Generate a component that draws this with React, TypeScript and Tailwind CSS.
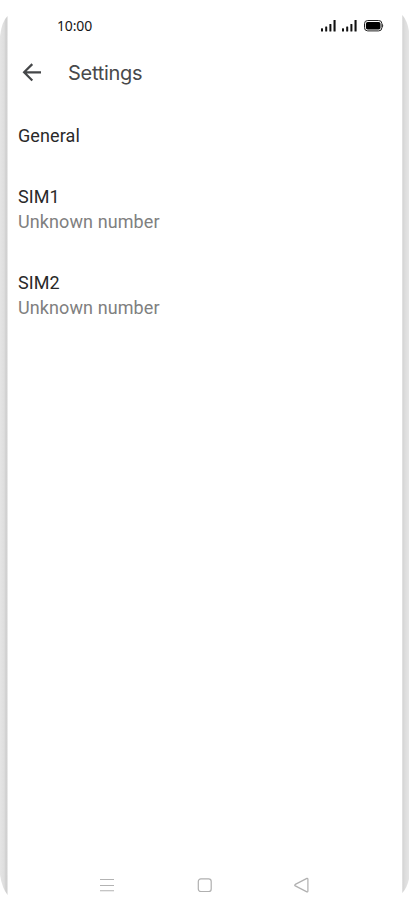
import React from 'react';

interface Sim {
  name: string;
  number: string;
}

const sims: Sim[] = [
  { name: 'SIM1', number: 'Unknown number' },
  { name: 'SIM2', number: 'Unknown number' },
];

function SignalIcon() {
  return (
    <svg className="h-[12px] w-[15px]" viewBox="0 0 15 12" fill="#111">
      <rect x="0" y="8.2" width="2" height="3.3" rx="0.5" />
      <rect x="4.2" y="6.6" width="2" height="4.9" rx="0.5" />
      <rect x="8.4" y="4" width="2" height="7.5" rx="0.5" />
      <rect x="12.5" y="0" width="2.1" height="11.5" rx="0.5" />
    </svg>
  );
}

function BatteryIcon() {
  return (
    <svg className="h-[12px] w-[20px]" viewBox="0 0 20 12" fill="none">
      <rect x="0.5" y="0.5" width="17.4" height="10.4" rx="3.2" stroke="#222" strokeWidth="1" />
      <rect x="1.9" y="1.9" width="14.6" height="7.6" rx="1.8" fill="#000" />
      <path d="M18.2 4q1 .3 1 1.8t-1 1.8z" fill="#222" />
    </svg>
  );
}

function StatusBar() {
  return (
    <div className="flex h-[52px] items-center justify-between pl-[49px] pr-[18px]">
      <span className="font-['Noto_Sans',sans-serif] text-[14px] leading-none tracking-[-0.15px] text-[#161616]">10:00</span>
      <div className="flex items-center">
        <SignalIcon />
        <span className="w-[6px]" />
        <SignalIcon />
        <span className="w-[7px]" />
        <BatteryIcon />
      </div>
    </div>
  );
}

function Header() {
  return (
    <header className="flex h-[40px] items-center pl-[14px]">
      <svg className="h-[20px] w-[20px]" viewBox="0 0 20 20" fill="none" stroke="#454749" strokeWidth="2.2">
        <path d="M19 10.3H2.2M10.3 2.1 2.1 10.3l8.2 8.2" />
      </svg>
      <h1 className="ml-[26px] pt-[2px] font-['Inter',sans-serif] text-[20px] leading-none tracking-[-0.3px] text-[#48494b]">Settings</h1>
    </header>
  );
}

function EdgeLeft() {
  return (
    <svg className="h-full w-[8px] shrink-0" viewBox="0 0 8 910">
      <defs>
        <linearGradient id="edge-left">
          <stop offset="0" stopColor="#e5e5e5" />
          <stop offset="0.55" stopColor="#dedede" />
          <stop offset="0.8" stopColor="#cecece" />
          <stop offset="1" stopColor="#d8d8d8" />
        </linearGradient>
      </defs>
      <path d="M7.6 16Q2 21 0 36V875Q2 888 7.6 895z" fill="url(#edge-left)" />
    </svg>
  );
}

function EdgeRight() {
  return (
    <svg className="h-full w-[7px] shrink-0" viewBox="0 0 7 910">
      <defs>
        <linearGradient id="edge-right">
          <stop offset="0" stopColor="#d2d2d2" />
          <stop offset="0.4" stopColor="#dddddd" />
          <stop offset="1" stopColor="#e5e5e5" />
        </linearGradient>
      </defs>
      <path d="M.3 15Q5 20 7 31V879Q5 888 .3 893z" fill="url(#edge-right)" />
    </svg>
  );
}

function NavBar() {
  return (
    <nav className="mt-auto flex h-[50px] items-center pl-[91px]">
      <svg className="h-[16px] w-[16px]" viewBox="0 0 16 16" stroke="#b3b3b3" strokeWidth="1.1">
        <path d="M1 2.5h14M1 8.5h14M1 13.8h14" />
      </svg>
      <svg className="ml-[82px] h-[16px] w-[16px]" viewBox="0 0 16 16" fill="none" stroke="#b0b0b0" strokeWidth="1.2">
        <rect x="1.3" y="1.8" width="12.9" height="12.7" rx="2.6" />
      </svg>
      <svg className="ml-[80px] h-[16px] w-[17px]" viewBox="0 0 17 16" fill="none" stroke="#b0b0b0" strokeWidth="1.2" strokeLinejoin="round">
        <path d="M13.9 1.4 2.3 7.4q-1.2.8 0 1.5l11.6 6q1 .3 1-.8v-12q0-1-1-.7z" />
      </svg>
    </nav>
  );
}

export default function App() {
  return (
    <div className="flex h-[910px] w-[409px] overflow-hidden bg-white">
      <EdgeLeft />
      <div className="flex flex-1 flex-col font-['Roboto',sans-serif]">
        <StatusBar />
        <Header />
        <main className="px-[10px] pt-[32px] text-[18px] leading-6 tracking-[0.1px] text-[#292929]">
          <p>General</p>
          {sims.map((sim) => (
            <div key={sim.name} className="mt-[37px]">
              <p>{sim.name}</p>
              <p className="mt-px text-[#808080]">{sim.number}</p>
            </div>
          ))}
        </main>
        <NavBar />
      </div>
      <EdgeRight />
    </div>
  );
}
